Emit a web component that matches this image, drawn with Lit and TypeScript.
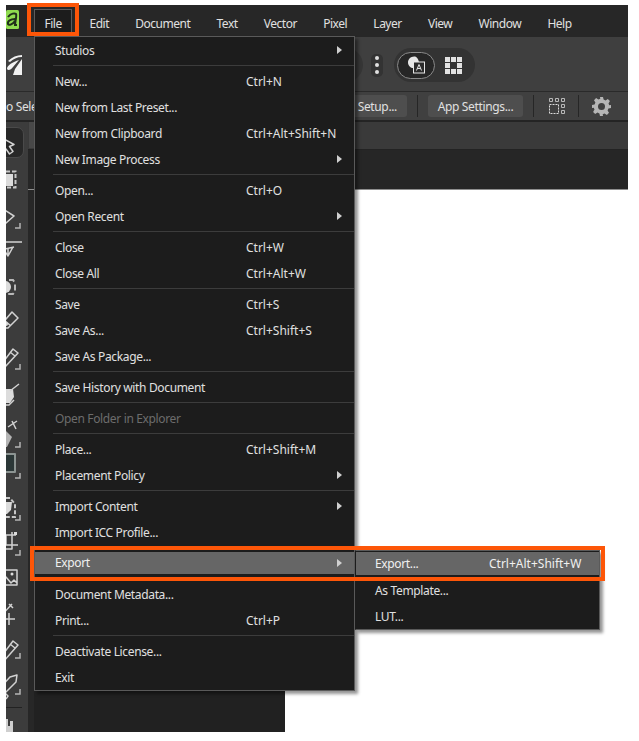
import { LitElement, html, css, svg } from "lit";
import { customElement } from "lit/decorators.js";

type Row =
  | { sep: true }
  | { label: string; key?: string; sub?: boolean; off?: boolean; hl?: boolean };

const S: Row = { sep: true };
const FILE_MENU: Row[] = [
  { label: "Studios", sub: true }, S,
  { label: "New...", key: "Ctrl+N" },
  { label: "New from Last Preset..." },
  { label: "New from Clipboard", key: "Ctrl+Alt+Shift+N" },
  { label: "New Image Process", sub: true }, S,
  { label: "Open...", key: "Ctrl+O" },
  { label: "Open Recent", sub: true }, S,
  { label: "Close", key: "Ctrl+W" },
  { label: "Close All", key: "Ctrl+Alt+W" }, S,
  { label: "Save", key: "Ctrl+S" },
  { label: "Save As...", key: "Ctrl+Shift+S" },
  { label: "Save As Package..." }, S,
  { label: "Save History with Document" }, S,
  { label: "Open Folder in Explorer", off: true }, S,
  { label: "Place...", key: "Ctrl+Shift+M" },
  { label: "Placement Policy", sub: true }, S,
  { label: "Import Content", sub: true },
  { label: "Import ICC Profile..." }, S,
  { label: "Export", sub: true, hl: true }, S,
  { label: "Document Metadata..." },
  { label: "Print...", key: "Ctrl+P" }, S,
  { label: "Deactivate License..." },
  { label: "Exit" },
];
const EXPORT_MENU: Row[] = [
  { label: "Export...", key: "Ctrl+Alt+Shift+W", hl: true },
  { label: "As Template..." },
  { label: "LUT..." },
];
const MENU_BAR = ["File", "Edit", "Document", "Text", "Vector", "Pixel", "Layer", "View", "Window", "Help"];

const corner = (y: number) => svg`<path class="cn" d="M14 ${y - 5}v5h-5"/>`;
const TOOLS: { h: number; sel?: boolean; icon: unknown }[] = [
  { h: 35, sel: true, icon: svg`<path class="o" d="M-6 10L8 17.500L3.500 19.500L7 24.500L3.500 27L0 22L-3 26L-6 24"/>` },
  { h: 37, icon: svg`<rect class="f" x="-6" y="12" width="13" height="12"/><path class="d" d="M-6 9.500H9.500V25.500H-6"/>` },
  { h: 33, icon: svg`<path class="o" d="M-6 8L8 17L-1 25H-6M-6 17H-3"/>${corner(29)}` },
  { h: 37, icon: svg`<path class="o" d="M-6 10H16M-6 18L8 15M2 16V24M-2 18L2 24L7 15"/>` },
  { h: 33, icon: svg`<circle class="f" cx="-1" cy="18" r="6"/><path class="d2" d="M-6 11H7L9 14V22L7 25H-6"/>` },
  { h: 37, icon: svg`<path class="o" d="M-6 24L6 10L12 16L2 26H-6M-2 18L5 24"/><circle class="f" cx="0" cy="22" r="2"/>` },
  { h: 36, icon: svg`<path class="o" d="M-6 27L7 10L12 14L-3 30H-6M4 13L9 17"/>${corner(30)}` },
  { h: 40, icon: svg`<path class="f" d="M-6 14H7L8 22L4 28H-6Z"/><path class="o" d="M4 16L13 9M-6 30H3L8 25"/>` },
  { h: 31, icon: svg`<path class="f" d="M-6 22L0 16L6 22L1 32H-6Z" opacity=".75"/><path class="o" d="M2 12L11 6M6 6L10 14"/>${corner(32)}` },
  { h: 44, icon: svg`<rect class="o sq" x="-6" y="8" width="15" height="18" fill="#2c3a3a"/>${corner(32)}` },
  { h: 33, icon: svg`<path class="f" d="M-6 12H6L5 20L1 24H-6Z"/><path class="d" d="M-6 8H4L9 14V27H-6"/>${corner(30)}` },
  { h: 37, icon: svg`<path class="o" d="M-6 12H10M6 9V26H-6M0 12V22H12"/><rect class="f" x="8" y="9" width="3" height="3"/>${corner(32)}` },
  { h: 36, icon: svg`<path class="o" d="M-6 10H11V25H-6M-6 23L0 17L5 23L8 20L11 23"/><circle class="f" cx="6" cy="14" r="1.500"/>` },
  { h: 34, icon: svg`<path class="o" d="M-6 21L6 8M3 8L7 12M-6 13H-2M3 17V29M-3 23H9"/>` },
  { h: 36, icon: svg`<path class="o" d="M-6 28L7 11L12 15L-2 31H-6M4 14L9 18"/>${corner(28)}` },
  { h: 45, icon: svg`<path class="o" d="M-6 22L4 11L11 9L10 16L-1 27L-6 30M-1 27L2 30L0 33M-6 22L-6 18"/>${corner(28)}` },
  { h: 36, icon: svg`<path class="hand" d="M-6 22V10H-3V15H-1V8H2V15H4V10H7V22Z"/>` },
];

@customElement("app-root")
export class AppRoot extends LitElement {
  static styles = css`
    :host { display: block; width: 639px; height: 741px; box-sizing: border-box; padding: 5px 11px 9px 6px; background: #fff; position: relative; overflow: hidden; font: 12px/16px "Noto Sans", sans-serif; letter-spacing: -0.35px; color: #e0e0e0; }
    .win { height: 100%; display: flex; flex-direction: column; background: #262626; overflow: hidden; }

    .bar { height: 32px; flex: none; display: flex; gap: 5.300px; background: #272727; align-items: flex-end; padding-left: 28px; position: relative; letter-spacing: -0.5px; }
    .bar .m { height: 28px; box-sizing: border-box; padding: 6px 9.500px 0; border: 1px solid transparent; border-bottom: 0; }
    .bar .m.open { background: #1c1c1c; border-color: #5b5b5b; margin-right: 1.500px; }
    .green { position: absolute; left: 0; top: 5px; width: 13px; height: 19px; }

    .tb1 { height: 54px; flex: none; background: #3f3f3f; display: flex; align-items: center; position: relative; padding-left: 294px; }
    .logo { position: absolute; left: 0; top: 18px; width: 17px; height: 20px; }
    .pill0 { width: 63px; height: 34px; border-radius: 0 17px 17px 0; background: #363636; margin-top: 2px; }
    .dots { width: 12px; height: 23px; margin: 2px 0 0 8px; border-radius: 5px; background: #333; display: flex; flex-direction: column; align-items: center; justify-content: center; gap: 3px; }
    .dots i { width: 4px; height: 4px; border-radius: 50%; background: #e0e0e0; }
    .pill { width: 81px; height: 34px; box-sizing: border-box; margin: 2px 0 0 11px; border-radius: 17px; background: #333; display: flex; align-items: center; padding-left: 3px; }
    .toggle { width: 38px; height: 27px; box-sizing: border-box; border: 1px solid #8a8a8a; border-radius: 14px; background: #262626; display: flex; align-items: center; justify-content: center; }
    .grid9 { margin-left: 10px; width: 17px; height: 17px; display: block; }

    .tb2 { height: 31px; flex: none; box-sizing: border-box; background: #404040; border-top: 1px solid #2a2a2a; border-bottom: 2px solid #242424; display: flex; align-items: center; }
    .clip { width: 29px; flex: none; white-space: nowrap; padding-top: 1px; }
    .tb2 .btn { height: 22px; box-sizing: border-box; border-radius: 3px; background: #4e4e4e; display: flex; align-items: center; padding-top: 1px; }
    .setup { width: 101px; margin-left: 271px; justify-content: flex-end; padding-right: 10px; }
    .app { width: 95px; justify-content: center; }
    .vs { width: 1px; height: 22px; background: #262626; flex: none; }
    .vs.a { margin: 0 10px; }
    .vs.b { margin: 0 14px 0 10px; }
    .vs.c { margin: 0 13px 0 12px; }
    .tb2 svg { display: block; flex: none; }

    .body { flex: 1; min-height: 0; display: flex; }
    .tools { width: 22px; flex: none; background: #3c3c3c; padding-top: 5px; overflow: hidden; display: flex; flex-direction: column; position: relative; }
    .tool { flex: none; position: relative; }
    .tool svg { position: absolute; left: 0; top: 0; width: 22px; height: 40px; overflow: visible; }
    .tool.sel::before { content: ""; position: absolute; left: -8px; top: 0; width: 26px; height: 31px; background: #282828; border: 1px solid #4a4a4a; border-radius: 7px; box-sizing: border-box; }
    .o { fill: none; stroke: #d2d2d2; stroke-width: 1.5; stroke-linejoin: round; }
    .o.sq { stroke: #8c9492; stroke-width: 2; fill: #2b3737; }
    .f { fill: #dcdcdc; }
    .d { fill: none; stroke: #c8c8c8; stroke-width: 2; stroke-dasharray: 4 2; }
    .d2 { fill: none; stroke: #b8b8b8; stroke-width: 2; stroke-dasharray: 6 3; }
    .cn { fill: none; stroke: #b4b4b4; stroke-width: 1.5; }
    .hand { fill: #cfcfcf; }
    .rule { position: absolute; left: 0; top: 585px; width: 16px; height: 1px; background: #222; }

    .work { flex: 1; min-width: 0; display: flex; flex-direction: column; }
    .tabs { height: 27px; flex: none; background: #3a3a3a; border-bottom: 1px solid #232323; display: flex; }
    .tabs i { width: 6px; margin: 0 0 1px 1px; background: #484848; }
    .strip { height: 39px; flex: none; background: #262626; border-bottom: 1px solid #8f8f8f; }
    .lower { flex: 1; min-height: 0; display: flex; }
    .side { width: 257px; flex: none; background: #212121; border-left: 6px solid #272727; box-sizing: border-box; }
    .canvas { flex: 1; background: #fff; }

    .menu { position: absolute; box-sizing: border-box; background: #1c1c1c; border: 1px solid #5a5a5a; box-shadow: 3px 3px 3px rgba(0,0,0,.42); }
    .main { left: 34px; top: 36px; width: 321px; height: 655px; }
    .subm { left: 355px; top: 550px; width: 245px; height: 80px; border-left-color: #1c1c1c; }
    .row { height: 26px; display: flex; align-items: center; padding: 1px 0 0 20px; position: relative; box-sizing: border-box; white-space: nowrap; }
    .row .l { width: 191px; flex: none; }
    .row .k { flex: none; letter-spacing: 0; }
    .row.off { color: #6c6c6c; }
    .row.hl { background: #666; background-clip: padding-box; border-top: 2px solid #1c1c1c; border-bottom: 2px solid #1c1c1c; color: #f0f0f0; padding-top: 0; }
    .subm .row { padding-left: 19px; }
    .subm .row.hl { border-top-width: 1px; }
    .subm .row .l { width: 114px; }
    .ar { position: absolute; left: 302px; top: 50%; margin-top: -4px; width: 0; height: 0; border-left: 5px solid #d0d0d0; border-top: 4px solid transparent; border-bottom: 4px solid transparent; }
    .sep { height: 5px; display: flex; align-items: center; padding-left: 18px; }
    .sep::after { content: ""; flex: 1; height: 1px; background: #3c3c3c; }

    .mark { position: absolute; box-sizing: border-box; border: 4px solid #fd5608; pointer-events: none; }
    .mark.a { left: 27px; top: 3px; width: 52px; height: 33px; }
    .mark.b { left: 30px; top: 546px; width: 575px; height: 35px; }
  `;

  private rows(list: Row[]) {
    return list.map((r) =>
      "sep" in r
        ? html`<div class="sep"></div>`
        : html`<div class="row ${r.off ? "off" : ""} ${r.hl ? "hl" : ""}">
            <span class="l">${r.label}</span>${r.key ? html`<span class="k">${r.key}</span>` : ""}
            ${r.sub ? html`<span class="ar"></span>` : ""}
          </div>`
    );
  }

  render() {
    return html`
      <div class="win">
        <div class="bar">
          <svg class="green" viewBox="0 0 13 19">
            <rect width="13" height="19" rx="1.500" fill="#8fdc50"/>
            <path d="M2 7C5 3 9 3 10 4C11 6 9 12 9 15H11M9 9C5 9 1 11 2 14C3 16 7 14 9 11" fill="none" stroke="#20301a" stroke-width="2"/>
          </svg>
          ${MENU_BAR.map((m, i) => html`<div class="m ${i === 0 ? "open" : ""}">${m}</div>`)}
        </div>

        <div class="tb1">
          <svg class="logo" viewBox="0 0 17 20">
            <path d="M2 6C6 2 11 0 16 0L16 2C11 2 7 4 4 7ZM1 14C1 10 7 7 13 5L7 12C5 15 2 16 1 14ZM16 4V20H7L9 14Z" fill="#f2f2f2"/>
          </svg>
          <div class="pill0"></div>
          <div class="dots"><i></i><i></i><i></i></div>
          <div class="pill">
            <div class="toggle">
              <svg width="26" height="22" viewBox="0 0 26 22">
                <path d="M12 2.500C8 2 5 5 5 8.500C5 12 8 14 10 14V9H16C16 6 14 3 12 2.500Z" fill="#e6e6e6"/>
                <rect x="10.500" y="8" width="11" height="11" fill="#2b2b2b" stroke="#e6e6e6" stroke-width="1"/>
                <path d="M13.500 16.500L16 10.500L18.500 16.500M14.500 14.500H17.500" fill="none" stroke="#e6e6e6"/>
              </svg>
            </div>
            <svg class="grid9" viewBox="0 0 17 17" fill="#e2e2e2">
              <rect width="5" height="5"/><rect x="6" width="5" height="5"/><rect x="12" width="5" height="5"/>
              <rect y="6" width="5" height="5"/><rect x="12" y="6" width="5" height="5"/>
              <rect y="12" width="5" height="5"/><rect x="6" y="12" width="5" height="5"/><rect x="12" y="12" width="5" height="5"/>
            </svg>
          </div>
        </div>

        <div class="tb2">
          <div class="clip">o Sele</div>
          <div class="btn setup">Setup...</div>
          <div class="vs a"></div>
          <div class="btn app">App Settings...</div>
          <div class="vs b"></div>
          <svg width="18" height="18" viewBox="0 0 18 18" fill="none" stroke="#b8b8b8" stroke-width="1">
            <path d="M1.500 1.500h3v3h-3zM7.500 1.500h3v3h-3zM13.500 1.500h3v3h-3zM13.500 7.500h3v3h-3zM13.500 13.500h3v3h-3z"/>
            <path d="M1.500 7.500H10.500V16.500H1.500Z" stroke="#dcdcdc" stroke-dasharray="2 1"/>
          </svg>
          <div class="vs c"></div>
          <svg width="19" height="19" viewBox="0 0 19 19">
            <path d="M8 0h3l.6 2.600 1.900.8 2.300-1.400 2.100 2.100-1.400 2.300.8 1.900L19 8v3l-2.600.6-.8 1.900 1.400 2.300-2.100 2.100-2.300-1.400-1.900.8L11 19H8l-.6-2.600-1.900-.8-2.300 1.400-2.100-2.100 1.400-2.300-.8-1.900L0 11V8l2.600-.6.8-1.900L2 3.200 4.100 1.100l2.300 1.400 1.900-.8z" fill="#b5b5b5"/>
            <circle cx="9.500" cy="9.500" r="3.500" fill="#404040"/>
          </svg>
        </div>

        <div class="body">
          <div class="tools">
            ${TOOLS.map(
              (t) => html`<div class="tool ${t.sel ? "sel" : ""}" style="height:${t.h}px">
                <svg viewBox="0 0 22 40">${t.icon}</svg>
              </div>`
            )}
            <div class="rule"></div>
          </div>
          <div class="work">
            <div class="tabs"><i></i></div>
            <div class="strip"></div>
            <div class="lower"><div class="side"></div><div class="canvas"></div></div>
          </div>
        </div>
      </div>

      <div class="menu main">${this.rows(FILE_MENU)}</div>
      <div class="menu subm">${this.rows(EXPORT_MENU)}</div>
      <div class="mark a"></div>
      <div class="mark b"></div>
    `;
  }
}
